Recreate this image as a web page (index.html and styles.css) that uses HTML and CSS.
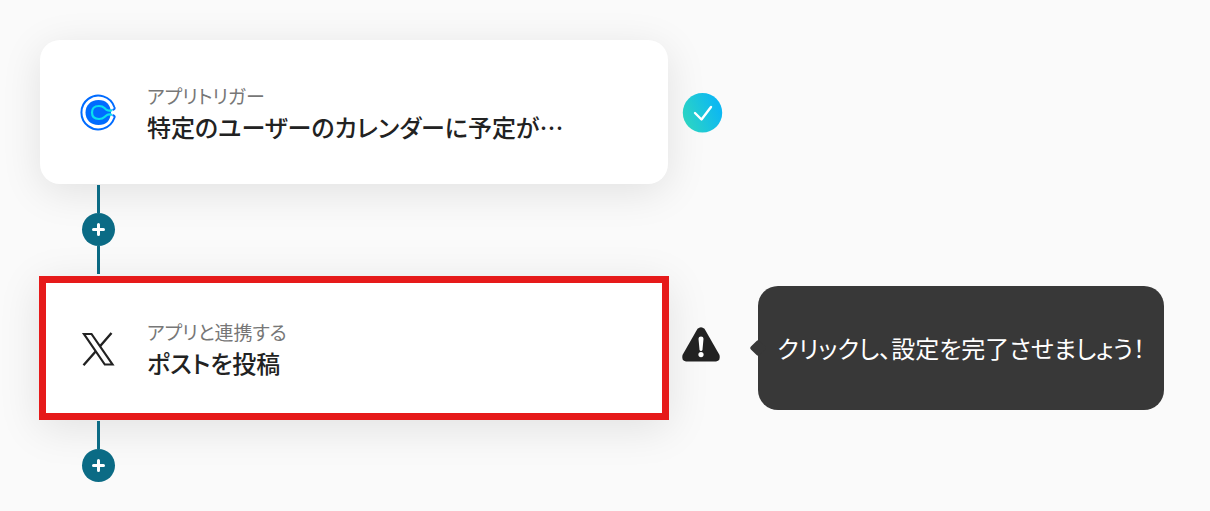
FILE: index.html
```html
<!DOCTYPE html>
<html lang="ja">
<head>
    <meta charset="UTF-8">
    <meta name="viewport" content="width=device-width, initial-scale=1.0">
    <title>フローボット</title>
    <link rel="stylesheet" href="styles.css">
</head>
<body>
    <main class="flow">
        <!-- トリガー -->
        <button type="button" class="card">
            <svg class="app-icon" viewBox="0 0 36 36" aria-hidden="true">
                <path d="M31 17.500Q30 30 18.500 30C10.500 30 5.500 24.500 5.500 17.500S10.500 5 18.500 5Q30 5 31 17.500Z" fill="#006bff"/>
                <path d="M36 15.300L31 17.500L36 19.700Z" fill="#fff"/>
                <path d="M34.300 12A16.900 16.900 0 1 0 34.300 23Q35.700 21 32.500 20M34.300 12Q35.700 14 32.500 15" fill="none" stroke="#006bff" stroke-width="2"/>
                <path d="M32 15.100C28 16.500 26.500 15 24.500 13Q22.500 11 19 11C14 11 12 14 12 17.500S14 24 19 24Q22.500 24 24.500 22C26.500 20 28 18.500 32 19.900" fill="none" stroke="#0ae0ee" stroke-width="2.200"/>
            </svg>
            <span class="card-text">
                <span class="card-label">アプリトリガー</span>
                <span class="card-title">特定のユーザーのカレンダーに予定が…</span>
            </span>
        </button>
        <svg class="status" viewBox="0 0 40 40" role="img" aria-label="設定完了">
            <defs>
                <linearGradient id="done" x1="0" y1="0.7" x2="1" y2="0.3">
                    <stop offset="0.05" stop-color="#2bd4c4"/>
                    <stop offset="0.9" stop-color="#0db8f2"/>
                </linearGradient>
            </defs>
            <circle cx="20.500" cy="20.700" r="19.700" fill="url(#done)"/>
            <path d="M13 21L19.500 27.500L29 15" fill="none" stroke="#fff" stroke-width="2.400" stroke-linecap="round" stroke-linejoin="round"/>
        </svg>

        <div class="connector">
            <span class="line"></span>
            <button type="button" class="add" aria-label="追加">
                <svg viewBox="0 0 15 15" aria-hidden="true"><path d="M7.500 2.500V12.500M2.500 7.500H12.500" stroke="#fff" stroke-width="3" stroke-linecap="round"/></svg>
            </button>
            <span class="line"></span>
        </div>

        <!-- アクション -->
        <button type="button" class="card card-active">
            <svg class="app-icon" viewBox="0 0 36 36" aria-hidden="true">
                <path d="M4 3H11.500L32.500 33.500H24.800Z" fill="#fff" stroke="#222" stroke-width="2.200"/>
                <path d="M31.500 2L19.800 15.500M15.600 20.500L3.500 34.300" fill="none" stroke="#222" stroke-width="2.400"/>
            </svg>
            <span class="card-text">
                <span class="card-label">アプリと連携する</span>
                <span class="card-title">ポストを投稿</span>
            </span>
        </button>
        <svg class="status" viewBox="0 0 40 40" role="img" aria-label="未設定">
            <path d="M15.500 0.800Q19 -2.500 22.500 0.800L37.500 27Q39 32.500 34 33.500H4Q-1 32.500 0.500 27Z" fill="#222"/>
            <path d="M16.500 10.700Q16.500 8.500 19 8.500T21.500 10.700L20.500 21.500Q20.300 23 19 23T17.500 21.500Z" fill="#fff"/>
            <circle cx="19" cy="26.600" r="2.600" fill="#fff"/>
        </svg>
        <div class="tooltip" role="tooltip">クリックし、設定を完了させましょう！</div>

        <div class="connector connector-last">
            <span class="line"></span>
            <button type="button" class="add" aria-label="追加">
                <svg viewBox="0 0 15 15" aria-hidden="true"><path d="M7.500 2.500V12.500M2.500 7.500H12.500" stroke="#fff" stroke-width="3" stroke-linecap="round"/></svg>
            </button>
        </div>
    </main>
</body>
</html>
```
FILE: styles.css
```css
* {
    box-sizing: border-box;
}
body {
    margin: 0;
    background-color: #fafafa;
    color: #222;
    font-family: "Noto Sans CJK JP", sans-serif;
    font-feature-settings: "palt";
}
button {
    border: 0;
    padding: 0;
    font: inherit;
    color: inherit;
    cursor: pointer;
}
.flow {
    display: grid;
    grid-template-columns: minmax(0, 1fr) 40px auto;
    align-items: center;
    column-gap: 14px;
    padding: 40px 46px 28px 40px;
}
.card {
    display: flex;
    align-items: center;
    gap: 31px;
    min-height: 144px;
    padding: 2px 40px 0;
    background-color: #fff;
    border-radius: 20px;
    box-shadow: 0 8px 40px rgba(0, 0, 0, 0.1);
    text-align: left;
}
.card-active {
    margin: 0 -1px;
    padding: 2px 34px 0;
    border: 7px solid #e61a1a;
    border-radius: 0;
}
.app-icon {
    width: 36px;
    height: 36px;
    flex: none;
    overflow: visible;
}
.card-text {
    display: flex;
    flex-direction: column;
    min-width: 0;
}
.card-label {
    font-size: 19px;
    line-height: 28px;
    color: #777;
}
.card-title {
    font-size: 24px;
    font-weight: 500;
    line-height: 34px;
}
.status {
    width: 40px;
    height: 40px;
    overflow: visible;
}
/* 接続線 */
.connector {
    grid-column: 1 / -1;
    display: flex;
    flex-direction: column;
    align-items: center;
    width: 33px;
    margin-left: 42px;
    padding: 1px 0 2px;
}
.connector-last {
    padding-bottom: 0;
}
.line {
    width: 3px;
    height: 28px;
    background-color: #0b6b85;
}
.add {
    display: grid;
    place-items: center;
    width: 33px;
    height: 33px;
    border-radius: 50%;
    background-color: #0b6b85;
}
.add svg {
    width: 15px;
    height: 15px;
}
.tooltip {
    position: relative;
    margin-left: 22px;
    padding: 44px 19px;
    border-radius: 20px;
    background-color: #383838;
    color: #fff;
    font-size: 24px;
    line-height: 36px;
}
.tooltip::before {
    content: "";
    position: absolute;
    top: 50%;
    left: -6px;
    width: 12px;
    height: 12px;
    margin-top: -6px;
    border-radius: 2px;
    background-color: #383838;
    transform: rotate(45deg);
}
```
